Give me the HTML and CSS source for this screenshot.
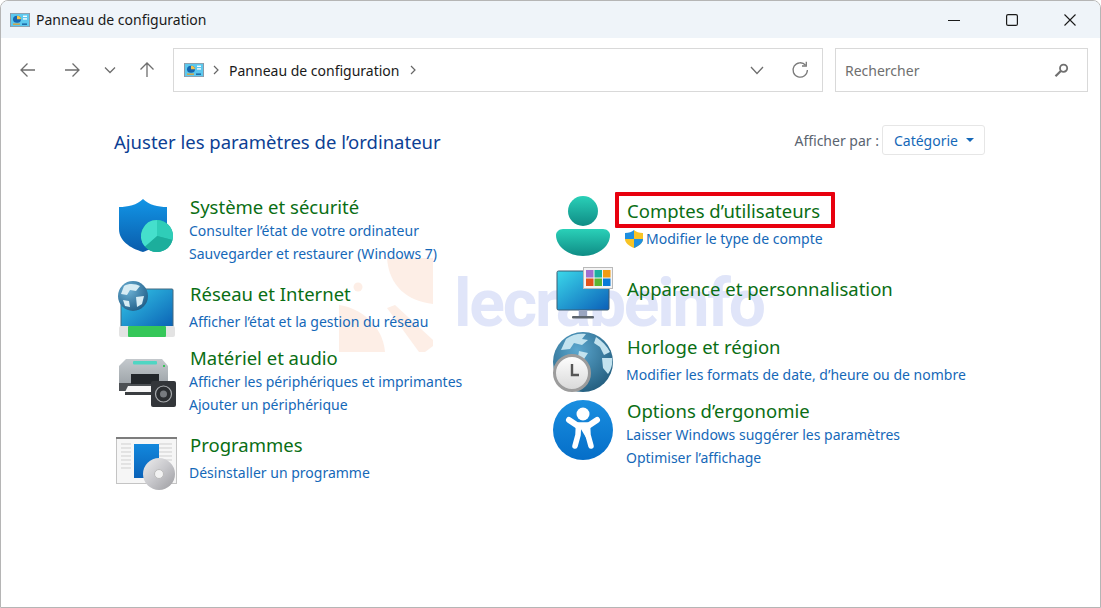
FILE: index.html
```html
<!DOCTYPE html>
<html lang="fr">
<head>
    <meta charset="UTF-8">
    <title>Panneau de configuration</title>
    <link rel="stylesheet" href="styles.css">
</head>
<body>
<div class="window">
    <!-- Watermark -->
    <div class="watermark">
        <svg class="wm-logo" width="100" height="96" viewBox="0 0 100 96">
            <path d="M50 0 H96 V46 C70 43 52 28 50 0 Z" fill="#fdeee6"/>
            <circle cx="21" cy="29" r="4.500" fill="#fdeee6"/>
            <path d="M2 47 C24 50 46 68 48 94 H2 Z" fill="#fdeee6"/>
            <path d="M50 50 L58 47 L96 82 V88 L88 94 H82 Z" fill="#fdeee6"/>
        </svg>
        <span class="wm-text">lecrabeinfo</span>
    </div>

    <header class="titlebar">
        <svg class="cp-icon" width="20" height="14" viewBox="0 0 20 16" preserveAspectRatio="none">
            <rect x="0.5" y="0.5" width="19" height="15" fill="#5cc8ee" stroke="#8a9aa8"/>
            <circle cx="7" cy="7" r="4" fill="#1566b0"/>
            <path d="M7 7 V3 A4 4 0 0 1 11 7 Z" fill="#f3c14b"/>
            <rect x="3" y="12" width="7" height="1.5" fill="#e0a030"/>
            <rect x="13" y="3" width="4" height="1.5" fill="#fff"/>
            <rect x="13" y="6" width="4" height="1.5" fill="#fff"/>
            <rect x="12" y="12" width="5" height="1.5" fill="#135a9c"/>
        </svg>
        <span class="titlebar-text">Panneau de configuration</span>
        <div class="win-buttons">
            <svg width="12" height="12" viewBox="0 0 12 12"><path d="M0 6.5 H12" stroke="#1a1a1a" stroke-width="1.2"/></svg>
            <svg width="12" height="12" viewBox="0 0 12 12"><rect x="0.6" y="0.6" width="10.8" height="10.8" rx="1.5" fill="none" stroke="#1a1a1a" stroke-width="1.2"/></svg>
            <svg width="12" height="12" viewBox="0 0 12 12"><path d="M0.5 0.5 L11.5 11.5 M11.5 0.5 L0.5 11.5" stroke="#1a1a1a" stroke-width="1.1"/></svg>
        </div>
    </header>

    <div class="toolbar">
        <div class="nav-buttons">
            <svg width="16" height="16" viewBox="0 0 16 16"><path d="M15 8 H1 M7.5 1.5 L1 8 L7.5 14.5" fill="none" stroke="#6e6e6e" stroke-width="1.3"/></svg>
            <svg class="nav-fwd" width="16" height="16" viewBox="0 0 16 16"><path d="M1 8 H15 M8.5 1.5 L15 8 L8.5 14.5" fill="none" stroke="#6e6e6e" stroke-width="1.3"/></svg>
            <svg class="nav-down" width="12" height="8" viewBox="0 0 12 8"><path d="M1 1.5 L6 6.5 L11 1.5" fill="none" stroke="#6e6e6e" stroke-width="1.3"/></svg>
            <svg class="nav-up" width="16" height="16" viewBox="0 0 16 16"><path d="M8 15 V1 M1.5 7.5 L8 1 L14.5 7.5" fill="none" stroke="#6e6e6e" stroke-width="1.3"/></svg>
        </div>
        <div class="address">
            <svg class="cp-icon" width="20" height="14" viewBox="0 0 20 16" preserveAspectRatio="none">
                <rect x="0.5" y="0.5" width="19" height="15" fill="#5cc8ee" stroke="#8a9aa8"/>
                <circle cx="7" cy="7" r="4" fill="#1566b0"/>
                <path d="M7 7 V3 A4 4 0 0 1 11 7 Z" fill="#f3c14b"/>
                <rect x="3" y="12" width="7" height="1.5" fill="#e0a030"/>
                <rect x="13" y="3" width="4" height="1.5" fill="#fff"/>
                <rect x="13" y="6" width="4" height="1.5" fill="#fff"/>
                <rect x="12" y="12" width="5" height="1.5" fill="#135a9c"/>
            </svg>
            <svg class="crumb-sep" width="6" height="10" viewBox="0 0 6 10"><path d="M1 1 L5 5 L1 9" fill="none" stroke="#666" stroke-width="1.2"/></svg>
            <span class="crumb">Panneau de configuration</span>
            <svg class="crumb-sep2" width="6" height="10" viewBox="0 0 6 10"><path d="M1 1 L5 5 L1 9" fill="none" stroke="#666" stroke-width="1.2"/></svg>
            <svg class="addr-down" width="14" height="9" viewBox="0 0 14 9"><path d="M1 1 L7 7.5 L13 1" fill="none" stroke="#6e6e6e" stroke-width="1.3"/></svg>
            <svg class="addr-refresh" width="18" height="18" viewBox="0 0 18 18"><path d="M14.6 4.2 A7.2 7.2 0 1 0 16.4 9" fill="none" stroke="#7a7a7a" stroke-width="1.3"/><path d="M15.3 0.8 V5 H11" fill="none" stroke="#7a7a7a" stroke-width="1.3"/></svg>
        </div>
        <div class="search">
            <span class="search-text">Rechercher</span>
            <svg width="15" height="15" viewBox="0 0 15 15"><circle cx="9.6" cy="5.2" r="3.6" fill="none" stroke="#707070" stroke-width="1.8"/><path d="M6.8 8 L1.5 13.3" stroke="#707070" stroke-width="2.2"/></svg>
        </div>
    </div>

    <main class="content">
        <div class="content-head">
            <h1 class="heading">Ajuster les paramètres de l’ordinateur</h1>
            <div class="view-by">
                <span class="view-label">Afficher par :</span>
                <span class="view-btn">Catégorie<i class="caret"></i></span>
            </div>
        </div>

        <div class="columns">
            <div class="col col-left">
                <section class="cat cat-sys">
                    <svg class="cat-icon" width="64" height="64" viewBox="0 0 64 64">
                        <defs>
                            <linearGradient id="gShield" x1="0" y1="0" x2="0" y2="1"><stop offset="0" stop-color="#1295e6"/><stop offset="1" stop-color="#0a5cab"/></linearGradient>
                        </defs>
                        <path d="M27 4 C33 10 42 12 51 12 V34 C51 46 39 53 27 57 C14 53 3 46 3 34 V12 C12 12 21 10 27 4 Z" fill="url(#gShield)"/>
                        <circle cx="41" cy="41" r="16" fill="#1fb3a3"/>
                        <path d="M41 41 V25 A16 16 0 0 1 56.500 45 Z" fill="#2fcdb8"/>
                        <path d="M41 41 L56.500 45 A16 16 0 0 1 29 51.500 Z" fill="#1cae9c"/>
                        <path d="M41 41 L29 51.500 A16 16 0 0 1 41 25 Z" fill="#45dfcc"/>
                    </svg>
                    <div class="cat-body">
                        <a class="cat-title">Système et sécurité</a>
                        <a class="cat-link">Consulter l’état de votre ordinateur</a>
                        <a class="cat-link">Sauvegarder et restaurer (Windows 7)</a>
                    </div>
                </section>

                <section class="cat cat-net">
                    <svg class="cat-icon" width="64" height="64" viewBox="0 0 64 64">
                        <defs>
                            <linearGradient id="gScreen" x1="0" y1="0" x2="1" y2="1"><stop offset="0" stop-color="#35c9e8"/><stop offset="1" stop-color="#0b62b5"/></linearGradient>
                            <radialGradient id="gGlobe" cx="0.35" cy="0.3" r="0.8"><stop offset="0" stop-color="#6db2d6"/><stop offset="1" stop-color="#1d5a84"/></radialGradient>
                        </defs>
                        <rect x="5" y="9" width="52" height="38" rx="1" fill="url(#gScreen)" stroke="#44687e"/>
                        <rect x="3" y="46" width="56" height="11" rx="2" fill="#e3e3e3"/>
                        <rect x="12" y="46" width="38" height="11" rx="1" fill="#35c759"/>
                        <circle cx="17" cy="16" r="15" fill="url(#gGlobe)"/>
                        <path d="M8 6 C13 3 20 4 24 6 L20 11 L14 10 L11 15 L5 14 Z M20 17 L28 16 L26 24 L21 27 Z M7 20 L13 21 L14 27 L9 26 Z" fill="#d7ecf4"/>
                    </svg>
                    <div class="cat-body">
                        <a class="cat-title">Réseau et Internet</a>
                        <a class="cat-link cat-link-first">Afficher l’état et la gestion du réseau</a>
                    </div>
                </section>

                <section class="cat cat-hw">
                    <svg class="cat-icon" width="64" height="64" viewBox="0 0 64 64">
                        <defs>
                            <linearGradient id="gBody" x1="0" y1="0" x2="0" y2="1"><stop offset="0" stop-color="#c4c9cd"/><stop offset="1" stop-color="#9aa0a5"/></linearGradient>
                        </defs>
                        <path d="M10 9 H46 L52 16 V37 H3 V16 Z" fill="url(#gBody)"/>
                        <path d="M3 33 H52 V41 H3 Z" fill="#4c5054"/>
                        <rect x="17" y="11" width="24" height="3.500" rx="1" fill="#4fd6c3"/>
                        <rect x="47" y="15" width="2" height="2" fill="#39c35a"/>
                        <rect x="15" y="24" width="28" height="10" fill="#23272b"/>
                        <path d="M12 36 H42 V42 H9 Z" fill="#f6f6f6"/>
                        <rect x="9" y="42" width="32" height="3" fill="#3a3d40"/>
                        <rect x="35" y="31" width="25" height="26" rx="2" fill="#33363a"/>
                        <circle cx="47.500" cy="44" r="8" fill="#2b2e31" stroke="#a8abae" stroke-width="1.200"/>
                        <circle cx="47.500" cy="44" r="3.500" fill="#777b7f"/>
                    </svg>
                    <div class="cat-body">
                        <a class="cat-title">Matériel et audio</a>
                        <a class="cat-link">Afficher les périphériques et imprimantes</a>
                        <a class="cat-link">Ajouter un périphérique</a>
                    </div>
                </section>

                <section class="cat cat-prog">
                    <svg class="cat-icon" width="64" height="64" viewBox="0 0 64 64">
                        <defs>
                            <linearGradient id="gProg" x1="0" y1="0" x2="0" y2="1"><stop offset="0" stop-color="#1288dd"/><stop offset="1" stop-color="#0a62b8"/></linearGradient>
                            <linearGradient id="gCd" x1="0" y1="0" x2="1" y2="1"><stop offset="0" stop-color="#eeeeee"/><stop offset="0.5" stop-color="#c7c7cb"/><stop offset="1" stop-color="#9c9ca0"/></linearGradient>
                        </defs>
                        <rect x="0.500" y="1.500" width="60" height="46" fill="#f6f6f6" stroke="#c4c4c4"/>
                        <rect x="0" y="1" width="61" height="2" fill="#7d7d7d"/>
                        <path d="M5 8 H15 M5 12 H15 M5 16 H15 M5 20 H15 M5 24 H15 M5 28 H15 M5 32 H15 M43 8 H56 M43 12 H56 M43 16 H56 M43 20 H56 M43 24 H56" stroke="#cfcfcf"/>
                        <rect x="18" y="8" width="25" height="34" fill="url(#gProg)"/>
                        <circle cx="43" cy="38" r="16" fill="url(#gCd)"/>
                        <circle cx="43" cy="38" r="4.500" fill="#f2f2f2" stroke="#bbb"/>
                    </svg>
                    <div class="cat-body">
                        <a class="cat-title">Programmes</a>
                        <a class="cat-link cat-link-first">Désinstaller un programme</a>
                    </div>
                </section>
            </div>

            <div class="col col-right">
                <section class="cat cat-user">
                    <svg class="cat-icon" width="64" height="64" viewBox="0 0 64 64">
                        <defs>
                            <linearGradient id="gUser" x1="0" y1="0" x2="0" y2="1"><stop offset="0" stop-color="#2ad0b8"/><stop offset="1" stop-color="#0f8c85"/></linearGradient>
                        </defs>
                        <circle cx="31" cy="16" r="15" fill="url(#gUser)"/>
                        <path d="M11 34 H51 C55 34 58 37 58 40 C58 52 45 61 31 61 C17 61 4 52 4 40 C4 37 7 34 11 34 Z" fill="url(#gUser)"/>
                    </svg>
                    <div class="cat-body">
                        <a class="cat-title cat-title-marked">Comptes d’utilisateurs</a>
                        <div class="cat-shield">
                            <svg width="18" height="18" viewBox="0 0 18 18">
                                <path d="M9 0 C11 2 14 3 18 3 V9 C18 13 14 16 9 18 Z" fill="#f7c325"/>
                                <path d="M9 0 C7 2 4 3 0 3 V9 H9 Z" fill="#1e8fe0"/>
                                <path d="M9 9 H18 C18 13 14 16 9 18 Z" fill="#1e8fe0"/>
                                <path d="M0 9 H9 V18 C4 16 0 13 0 9 Z" fill="#f7c325"/>
                            </svg>
                            <a>Modifier le type de compte</a>
                        </div>
                    </div>
                </section>

                <section class="cat cat-look">
                    <svg class="cat-icon" width="64" height="64" viewBox="0 0 64 64">
                        <defs>
                            <linearGradient id="gMon" x1="0" y1="0" x2="1" y2="1"><stop offset="0" stop-color="#3bd8ea"/><stop offset="1" stop-color="#0b5fb8"/></linearGradient>
                        </defs>
                        <rect x="5" y="4" width="52" height="39" rx="1.500" fill="url(#gMon)" stroke="#3c5c72"/>
                        <rect x="27" y="43" width="8" height="7" fill="#9aa5c0"/>
                        <rect x="20" y="49" width="22" height="2.500" rx="1" fill="#5c646c"/>
                        <rect x="31.500" y="0.500" width="29" height="21" fill="#f4f4f4" stroke="#b9b9b9"/>
                        <rect x="34" y="3" width="7.500" height="7.500" fill="#a06fd0"/>
                        <rect x="42.500" y="3" width="7.500" height="7.500" fill="#1cb0a0"/>
                        <rect x="51" y="3" width="7.500" height="7.500" fill="#f39c12"/>
                        <rect x="34" y="11.500" width="7.500" height="7.500" fill="#e4531a"/>
                        <rect x="42.500" y="11.500" width="7.500" height="7.500" fill="#5cb531"/>
                        <rect x="51" y="11.500" width="7.500" height="7.500" fill="#0a7bd8"/>
                    </svg>
                    <div class="cat-body">
                        <a class="cat-title">Apparence et personnalisation</a>
                    </div>
                </section>

                <section class="cat cat-clock">
                    <svg class="cat-icon" width="64" height="64" viewBox="0 0 64 64">
                        <defs>
                            <radialGradient id="gEarth" cx="0.4" cy="0.3" r="0.8"><stop offset="0" stop-color="#5ba7cf"/><stop offset="1" stop-color="#1f5878"/></radialGradient>
                            <linearGradient id="gFace" x1="0" y1="0" x2="0" y2="1"><stop offset="0" stop-color="#ffffff"/><stop offset="1" stop-color="#d8d8d8"/></linearGradient>
                        </defs>
                        <circle cx="31" cy="31" r="30" fill="url(#gEarth)"/>
                        <path d="M14 8 C20 3 28 2 34 3 L30 8 L36 9 L30 14 L22 12 L18 18 L9 19 Z M44 6 C50 10 55 15 58 21 L52 24 L48 16 L42 12 Z M50 27 L60 27 C61 33 59 39 56 43 L51 37 Z M27 20 L36 22 L32 28 L26 26 Z" fill="#c3e3ef"/>
                        <circle cx="20" cy="42" r="17.500" fill="url(#gFace)" stroke="#9c9c9c" stroke-width="3"/>
                        <path d="M20 33 V44 H27" fill="none" stroke="#555" stroke-width="2.400"/>
                    </svg>
                    <div class="cat-body">
                        <a class="cat-title">Horloge et région</a>
                        <a class="cat-link cat-link-first">Modifier les formats de date, d’heure ou de nombre</a>
                    </div>
                </section>

                <section class="cat cat-ease">
                    <svg class="cat-icon" width="64" height="64" viewBox="0 0 64 64">
                        <defs>
                            <linearGradient id="gEase" x1="0" y1="0" x2="0" y2="1"><stop offset="0" stop-color="#1a8fe0"/><stop offset="1" stop-color="#056ec8"/></linearGradient>
                        </defs>
                        <circle cx="31" cy="31" r="30" fill="url(#gEase)"/>
                        <circle cx="31" cy="15" r="6.500" fill="#fff"/>
                        <path d="M17 21 L26 27 H36 L45 21" fill="none" stroke="#fff" stroke-width="6" stroke-linecap="round" stroke-linejoin="round"/>
                        <path d="M26.500 26 H35.500 L36 36 L39 47 M26.500 26 L26 36 L23 47" fill="#fff" stroke="#fff" stroke-width="5.500" stroke-linecap="round" stroke-linejoin="round"/>
                    </svg>
                    <div class="cat-body">
                        <a class="cat-title">Options d’ergonomie</a>
                        <a class="cat-link">Laisser Windows suggérer les paramètres</a>
                        <a class="cat-link">Optimiser l’affichage</a>
                    </div>
                </section>
            </div>
        </div>
    </main>
</div>
</body>
</html>
```

FILE: styles.css
```css
/* Global Styles */
html, body {
    margin: 0;
    padding: 0;
    height: 100%;
    background-color: #fff;
    overflow: hidden;
}

body {
    font-family: 'Noto Sans', 'Open Sans', sans-serif;
    color: #1a1a1a;
}

a {
    display: block;
    text-decoration: none;
}

.window {
    position: relative;
    height: 608px;
    box-sizing: border-box;
    border: 1px solid #b5b5b5;
    border-radius: 8px 8px 0 0;
    overflow: hidden;
    background-color: #fff;
}

/* Watermark */
.watermark {
    position: absolute;
    left: 336px;
    top: 257px;
    display: flex;
    align-items: flex-start;
}

.wm-text {
    margin-left: 17px;
    margin-top: 6px;
    font-family: 'Roboto', sans-serif;
    font-size: 66px;
    line-height: 80px;
    font-weight: 700;
    letter-spacing: -2.2px;
    color: #e0e5f9;
}

/* Title bar */
.titlebar {
    display: flex;
    align-items: center;
    height: 37px;
    padding-left: 9px;
    background-color: #eff4f9;
    font-size: 14px;
}

.titlebar-text {
    margin-left: 6px;
}

.win-buttons {
    margin-left: auto;
    display: flex;
    align-items: center;
    gap: 46px;
    padding-right: 24px;
}

/* Toolbar */
.toolbar {
    position: relative;
    display: flex;
    align-items: center;
    height: 44px;
    margin-top: 10px;
    padding-left: 19px;
}

.nav-buttons {
    display: flex;
    align-items: center;
    width: 153px;
}

.nav-fwd {
    margin-left: 28px;
}

.nav-down {
    margin-left: 24px;
}

.nav-up {
    margin-left: 23px;
}

.address {
    display: flex;
    align-items: center;
    width: 638px;
    height: 42px;
    border: 1px solid #d9d9d9;
    padding-left: 10px;
    font-size: 14px;
}

.crumb-sep {
    margin-left: 9px;
}

.crumb {
    margin-left: 10px;
}

.crumb-sep2 {
    margin-left: 10px;
}

.addr-down {
    margin-left: auto;
}

.addr-refresh {
    margin-left: 27px;
    margin-right: 13px;
}

.search {
    display: flex;
    align-items: center;
    justify-content: space-between;
    margin-left: 12px;
    width: 251px;
    height: 42px;
    border: 1px solid #d9d9d9;
    font-size: 14px;
    color: #6f6f6f;
}

.search-text {
    margin-left: 9px;
}

.search svg {
    margin-right: 18px;
}

/* Content */
.content {
    position: relative;
    z-index: 1;
    padding: 0 115px 0 113px;
}

.content-head {
    display: flex;
    align-items: center;
    justify-content: space-between;
    margin-top: 32px;
    height: 32px;
}

.heading {
    margin: 0;
    padding-top: 2px;
    font-size: 18.5px;
    font-weight: 400;
    color: #0d3f94;
}

.view-by {
    display: flex;
    align-items: center;
    gap: 3px;
    font-size: 14px;
}

.view-label {
    color: #5a6470;
}

.view-btn {
    display: flex;
    align-items: center;
    height: 28px;
    padding: 0 10px 0 11px;
    border: 1px solid #e6e6e6;
    border-radius: 3px;
    color: #1568b8;
}

.caret {
    margin-left: 8px;
    border-left: 4px solid transparent;
    border-right: 4px solid transparent;
    border-top: 4px solid #1568b8;
}

.columns {
    display: flex;
    margin-top: 39px;
}

.col {
    display: flex;
    flex-direction: column;
}

.col-left {
    width: 438px;
    padding-left: 2px;
    box-sizing: border-box;
}

/* Category rows */
.cat {
    display: flex;
    align-items: flex-start;
}

.cat-icon {
    flex: none;
    margin-right: 10px;
}

.col-right .cat-icon {
    margin-right: 11px;
}

.cat-net {
    margin-top: 15px;
}

.cat-net .cat-body {
    padding-top: 2px;
}

.cat-hw {
    margin-top: 2px;
}

.cat-hw .cat-icon {
    margin-top: 4px;
}

.cat-prog {
    margin-top: 17px;
}

.cat-prog .cat-icon {
    margin-top: 3px;
}

.cat-user .cat-body {
    padding-top: 4px;
}

.cat-look {
    margin-top: 8px;
}

.cat-look .cat-body {
    padding-top: 10px;
}

.cat-clock .cat-body {
    padding-top: 4px;
}

.cat-ease {
    margin-top: 4px;
}

.cat-title {
    font-size: 18.5px;
    line-height: 24px;
    color: #0a6e14;
}

.cat-link {
    margin-left: -1px;
    font-size: 14px;
    line-height: 23px;
    color: #1568b8;
}

.cat-link-first {
    margin-top: 4px;
}

.cat-title-marked {
    border: 4px solid #e8000e;
    padding: 3px 11px 1px 8px;
    margin: -7px 0 0 -12px;
    border-radius: 1px;
}

.cat-shield {
    display: flex;
    align-items: center;
    gap: 3px;
    margin-top: -1px;
    margin-left: -2px;
    font-size: 14px;
    line-height: 23px;
}

.cat-shield a {
    color: #1568b8;
}
```
